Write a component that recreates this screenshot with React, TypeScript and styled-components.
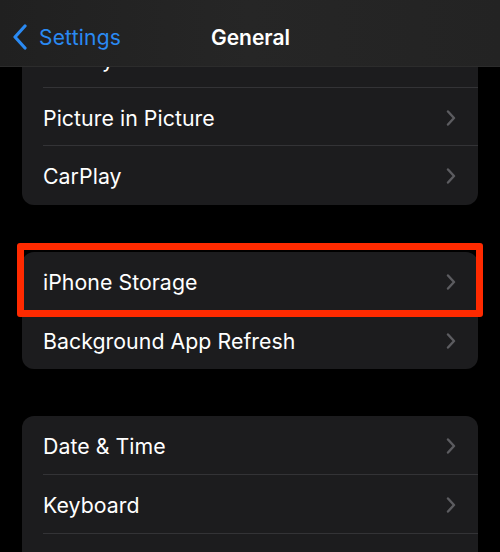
import React from "react";
import styled, { createGlobalStyle } from "styled-components";

const Global = createGlobalStyle`
  html, body { margin: 0; padding: 0; background: #000; }
  body { width: 500px; height: 552px; overflow: hidden; font-family: Inter, "Liberation Sans", sans-serif; -webkit-font-smoothing: antialiased; }
`;

const Screen = styled.div`
  position: relative;
  width: 500px;
  height: 552px;
  overflow: hidden;
  background: #000;
`;

const NavBar = styled.header`
  position: absolute;
  top: 0;
  left: 0;
  right: 0;
  height: 66px;
  background: linear-gradient(90deg, #202020 0%, #262626 50%, #232323 100%);
  border-bottom: 1px solid #2c2c2c;
  z-index: 5;
  display: flex;
  align-items: center;
  justify-content: center;
`;

const BackButton = styled.div`
  position: absolute;
  left: 12px;
  top: 24px;
  display: flex;
  align-items: center;
  gap: 11px;
  color: #2a8af3;
  font-size: 21px;
  letter-spacing: 0.2px;
`;

const Title = styled.div`
  color: #fff;
  font-size: 21px;
  font-weight: 600;
  margin-top: 9px;
  margin-left: 1px;
`;

const List = styled.div`
  display: flex;
  flex-direction: column;
  gap: 47px;
  padding: 29px 22px 0;
`;

const Card = styled.div`
  background: #1c1c1e;
  border-radius: 12px;
  display: flex;
  flex-direction: column;
`;

const Row = styled.div<{ $last?: boolean }>`
  position: relative;
  height: 58.7px;
  display: flex;
  align-items: center;
  justify-content: space-between;
  padding-left: 21px;
  padding-right: 22px;
  &::after {
    content: "";
    display: ${(p) => (p.$last ? "none" : "block")};
    position: absolute;
    left: 21px;
    right: 0;
    bottom: 0;
    height: 1px;
    background: #333336;
  }
`;

const Label = styled.span`
  color: #fff;
  font-size: 21.3px;
  letter-spacing: 0.05px;
  padding-top: 1px;
`;

const Highlight = styled.div`
  position: absolute;
  left: -5px;
  right: -5px;
  top: -9px;
  bottom: -6px;
  border: 7px solid #ff2a00;
  border-radius: 3px;
  pointer-events: none;
  z-index: 2;
`;

const Chevron = () => (
  <svg width="10" height="16" viewBox="0 0 10 16" style={{ marginTop: 1 }}>
    <path d="M2 1.5 L8 8 L2 14.5" fill="none" stroke="#5c5c60" strokeWidth="2.4" strokeLinecap="round" strokeLinejoin="round" />
  </svg>
);

const BackChevron = () => (
  <svg width="16" height="26" viewBox="0 0 16 26">
    <path d="M13 2 L3 13 L13 24" fill="none" stroke="#2a8af3" strokeWidth="3.2" strokeLinecap="round" strokeLinejoin="round" />
  </svg>
);

type Item = { label?: string; highlight?: boolean };

const groups: Item[][] = [
  [{ label: "AirPlay & Handoff" }, { label: "Picture in Picture" }, { label: "CarPlay" }],
  [{ label: "iPhone Storage", highlight: true }, { label: "Background App Refresh" }],
  [{ label: "Date & Time" }, { label: "Keyboard" }, {}],
];

export default function App() {
  return (
    <Screen>
      <Global />
      <NavBar>
        <BackButton>
          <BackChevron />
          <span>Settings</span>
        </BackButton>
        <Title>General</Title>
      </NavBar>
      <List>
        {groups.map((g, gi) => (
          <Card key={gi}>
            {g.map((r, ri) => (
              <Row key={ri} $last={ri === g.length - 1}>
                {r.label && (
                  <>
                    <Label>{r.label}</Label>
                    <Chevron />
                  </>
                )}
                {r.highlight && <Highlight />}
              </Row>
            ))}
          </Card>
        ))}
      </List>
    </Screen>
  );
}
